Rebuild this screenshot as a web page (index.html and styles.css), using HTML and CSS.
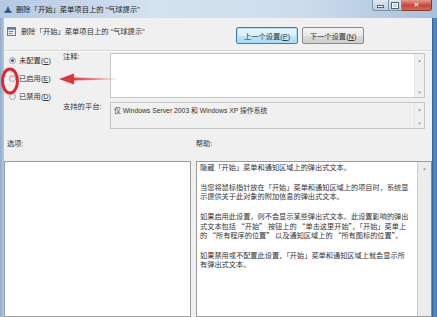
FILE: index.html
```html
<!DOCTYPE html>
<html lang="zh-CN">
<head>
  <meta charset="UTF-8" />
  <title>删除「开始」菜单项目上的“气球提示”</title>
  <link rel="stylesheet" href="styles.css">
</head>
<body>
  <div class="window">
    <!-- title bar -->
    <div class="titlebar">
      <svg class="app-icon" width="8" height="8" viewBox="0 0 8 8">
        <path d="M1 7 L4 1 L7 7 Z" fill="#2f63a8"/>
        <rect x="0.5" y="6.5" width="7" height="1.2" fill="#1b3f72"/>
      </svg>
      <span class="title">删除「开始」菜单项目上的 “气球提示”</span>
      <div class="caption-btns">
        <span class="cap cap-min"><i></i></span>
        <span class="cap cap-max"><i></i></span>
        <span class="cap cap-close">✕</span>
      </div>
    </div>

    <div class="frame">
      <div class="edge edge-left"></div>

      <div class="client">
        <!-- header with policy name and navigation -->
        <div class="header">
          <div class="policy-name">
            <svg class="policy-icon" width="9" height="9" viewBox="0 0 9 9">
              <rect x="0.5" y="0.5" width="8" height="8" fill="#e9eef3" stroke="#6b7b8c"/>
              <rect x="1" y="1" width="7" height="1.6" fill="#4f79a8"/>
              <rect x="1.8" y="4" width="4.5" height="1" fill="#7d8a96"/>
              <rect x="1.8" y="6" width="3.5" height="1" fill="#7d8a96"/>
            </svg>
            <span>删除「开始」菜单项目上的 “气球提示”</span>
          </div>
          <div class="nav-btns">
            <button class="btn btn-focus">上一个设置(<u>P</u>)</button>
            <button class="btn">下一个设置(<u>N</u>)</button>
          </div>
        </div>

        <!-- state + comment + platform -->
        <div class="settings">
          <div class="radios">
            <label class="radio"><span class="dot checked"></span>未配置(<u>C</u>)</label>
            <label class="radio"><span class="dot"></span>已启用(<u>E</u>)</label>
            <label class="radio"><span class="dot"></span>已禁用(<u>D</u>)</label>
          </div>

          <div class="field-label">注释:</div>
          <div class="box comment">
            <div class="box-body"></div>
            <div class="mini-scroll">
              <span class="arrow">▴</span>
              <span class="arrow">▾</span>
            </div>
          </div>

          <div class="field-label platform-label">支持的平台:</div>
          <div class="box platform">
            <div class="box-body">仅 Windows Server 2003 和 Windows XP 操作系统</div>
            <div class="mini-scroll">
              <span class="arrow">▴</span>
              <span class="arrow">▾</span>
            </div>
          </div>
        </div>

        <div class="panel-labels">
          <span class="options-label">选项:</span>
          <span class="help-label">帮助:</span>
        </div>

        <div class="panels">
          <div class="options-panel"></div>
          <div class="help-panel">
            <div class="help-text">
              <p>隐藏「开始」菜单和通知区域上的弹出式文本。</p>
              <p>当您将鼠标指针放在「开始」菜单和通知区域上的项目时，系统显<br>示提供关于此对象的附加信息的弹出式文本。</p>
              <p>如果启用此设置，则不会显示某些弹出式文本。此设置影响的弹出<br>式文本包括 “开始” 按钮上的 “单击这里开始”、「开始」菜单上<br>的 “所有程序的位置” 以及通知区域上的 “所有图标的位置”。</p>
              <p>如果禁用或不配置此设置，「开始」菜单和通知区域上就会显示所<br>有弹出式文本。</p>
            </div>
            <div class="help-scroll"><span class="arrow">▴</span></div>
          </div>
        </div>
      </div>

      <div class="edge edge-right"></div>
    </div>

    <!-- red markup drawn over the screenshot -->
    <svg class="annotation" width="437" height="317" viewBox="0 0 437 317">
      <defs>
        <linearGradient id="shaft" x1="0" x2="1" y1="0" y2="0">
          <stop offset="0" stop-color="#e3343a"/>
          <stop offset="1" stop-color="#e3343a" stop-opacity="0.15"/>
        </linearGradient>
      </defs>
      <ellipse cx="10" cy="81" rx="7.5" ry="12" fill="none" stroke="#e0252c" stroke-width="3"/>
      <path d="M59 79 L74 73.5 L74 84.5 Z" fill="#e3343a"/>
      <path d="M72 77.6 L116 78.4 L116 79.6 L72 80.6 Z" fill="url(#shaft)"/>
    </svg>
  </div>
</body>
</html>
```

FILE: styles.css
```css
body {
  margin: 0;
  font-family: "Liberation Sans", "Noto Sans CJK SC", sans-serif;
  font-size: 7.3px;
  color: #3a3a3a;
  background: #4a7db6;
}

.window {
  position: relative;
  width: 437px;
  height: 317px;
  overflow: hidden;
}

/* title bar */
.titlebar {
  display: flex;
  align-items: center;
  height: 18px;
  background: linear-gradient(to right, #b3c9e2, #d5e2ef 35%, #cddcec 70%, #a5c0de);
  color: #222;
}

.app-icon {
  margin-left: 4px;
  margin-top: -1px;
}

.title {
  margin-left: 4px;
  white-space: nowrap;
}

.caption-btns {
  display: flex;
  align-self: flex-start;
  margin-left: auto;
  margin-right: 5px;
}

.cap {
  display: flex;
  align-items: center;
  justify-content: center;
  height: 10px;
  border: 1px solid #7d93ad;
  border-top: none;
  background: linear-gradient(#dfe8f2, #b9cbe0);
}

.cap-min {
  width: 15px;
  border-radius: 0 0 0 3px;
}

.cap-min i {
  width: 5px;
  height: 1px;
  margin-top: 3px;
  background: #fff;
  box-shadow: 0 0 0 1px #52637a;
}

.cap-max {
  width: 12px;
  border-left: none;
}

.cap-max i {
  width: 4px;
  height: 3px;
  border: 1px solid #fff;
  box-shadow: 0 0 0 1px #52637a;
}

.cap-close {
  width: 29px;
  border-left: none;
  border-color: #8c3a2e;
  border-radius: 0 0 3px 0;
  background: linear-gradient(#e29a8d, #c8473a 55%, #d46a58);
  color: #fff;
  font-family: "DejaVu Sans", sans-serif;
  font-size: 7px;
  font-weight: bold;
}

/* window body */
.frame {
  display: flex;
  height: 299px;
}

.edge-left {
  width: 4px;
  background: linear-gradient(to right, #8fabc9, #b4c9df);
}

.edge-right {
  width: 5px;
  background: linear-gradient(to right, #2f5f97, #5d92cf 60%, #3a6ea9);
}

.client {
  width: 428px;
  background: #f0f0f0;
  display: flex;
  flex-direction: column;
}

/* header */
.header {
  display: flex;
  justify-content: space-between;
  height: 32px;
  border-bottom: 1px solid #d6d6d6;
  box-shadow: 0 1px 0 #fff;
}

.policy-name {
  display: flex;
  align-items: center;
  gap: 5px;
  align-self: flex-start;
  margin-top: 8px;
  margin-left: 3px;
  color: #333;
  white-space: nowrap;
}

.nav-btns {
  display: flex;
  gap: 4px;
  padding-top: 9px;
  margin-right: 68px;
}

.btn {
  width: 62px;
  height: 17px;
  padding: 0;
  border: 1px solid #8a8a8a;
  border-radius: 2px;
  background: linear-gradient(#f3f3f3, #e9e9e9 50%, #dadada 51%, #cfcfcf);
  font-family: inherit;
  font-size: 7.3px;
  color: #333;
  white-space: nowrap;
}

.btn-focus {
  border-color: #3c7fb1;
  box-shadow: inset 0 0 0 1px #a9dcf5;
  background: linear-gradient(#eaf6fd, #d9f0fc 50%, #bee6fd 51%, #a7d9f5);
}

/* settings area */
.settings {
  display: grid;
  grid-template-columns: 59px 47px 315px;
  grid-template-rows: 45px 27px;
  row-gap: 4px;
  padding-top: 2px;
}

.radios {
  grid-row: 1 / span 2;
  display: flex;
  flex-direction: column;
  margin-top: -2px;
}

.radio {
  display: flex;
  align-items: center;
  height: 18px;
  padding-left: 5px;
  white-space: nowrap;
  color: #333;
}

.dot {
  position: relative;
  width: 5px;
  height: 5px;
  margin-right: 3px;
  border: 1px solid #9aa3ad;
  border-radius: 50%;
  background: linear-gradient(#d7dbe0, #fafafa);
}

.dot.checked::after {
  content: "";
  position: absolute;
  left: 1px;
  top: 1px;
  width: 3px;
  height: 3px;
  border-radius: 50%;
  background: #2c5e8e;
}

.field-label {
  line-height: 8px;
  white-space: nowrap;
  color: #333;
}

.platform-label {
  padding-top: 1px;
}

.box {
  display: flex;
  border: 1px solid #c6c6c6;
}

.box-body {
  flex: 1;
}

.comment .box-body {
  background: #fff;
}

.platform .box-body {
  padding: 3px 0 0 3px;
  line-height: 9px;
  font-size: 6.8px;
  white-space: nowrap;
  color: #333;
}

.mini-scroll {
  display: flex;
  flex-direction: column;
  justify-content: space-between;
  width: 9px;
  padding: 3px 0 2px;
  background: #f0f0f0;
  border-left: 1px solid #e6e6e6;
}

.arrow {
  text-align: center;
  font-family: "DejaVu Sans", sans-serif;
  font-size: 5px;
  line-height: 6px;
  color: #9a9a9a;
}

/* labels above the two panels */
.panel-labels {
  display: flex;
  height: 32px;
  padding-top: 10px;
  box-sizing: border-box;
  line-height: 9px;
  color: #333;
}

.options-label {
  margin-left: 3px;
}

.help-label {
  margin-left: 172px;
}

/* bottom panels */
.panels {
  display: flex;
  gap: 5px;
  flex: 1;
}

.options-panel {
  width: 185px;
  border: 1px solid #9c9c9c;
  background: #fff;
}

.help-panel {
  flex: 1;
  display: flex;
  border: 1px solid #9c9c9c;
  border-right-color: #8a8a8a;
  background: #fff;
}

.help-text {
  flex: 1;
  padding: 1px 0 0 3px;
  font-family: "Noto Sans CJK SC", sans-serif;
  font-size: 7.2px;
  color: #333;
  white-space: nowrap;
}

.help-text p {
  margin: 0 0 10.5px;
  line-height: 9.4px;
}

.help-scroll {
  width: 13px;
  border-left: 1px solid #c9c9c9;
  background: #ececec;
  padding-top: 3px;
  display: flex;
  flex-direction: column;
}

.annotation {
  position: absolute;
  left: 0;
  top: 0;
  pointer-events: none;
}
```
